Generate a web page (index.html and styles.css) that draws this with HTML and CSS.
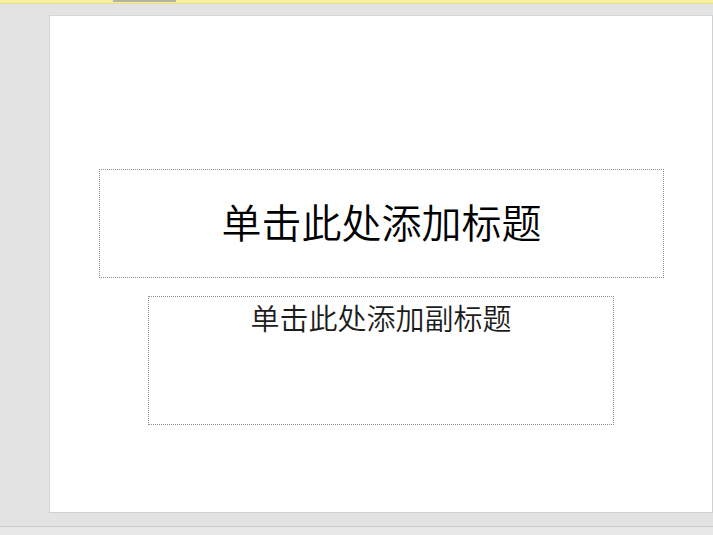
FILE: index.html
```html
<!DOCTYPE html>
<html lang="zh-CN">
<head>
<meta charset="utf-8">
<title>幻灯片</title>
<link rel="stylesheet" href="styles.css">
</head>
<body>
<div class="app">
  <div class="topbar"><div class="tab"></div></div>
  <div class="workspace">
    <div class="slide">
      <div class="ph title"><span>单击此处添加标题</span></div>
      <div class="ph subtitle"><span>单击此处添加副标题</span></div>
    </div>
  </div>
  <div class="statusbar"></div>
</div>
</body>
</html>
```
FILE: styles.css
```css
html, body {
  margin: 0;
  padding: 0;
  background: #e3e3e3;
}
.app {
  width: 713px;
  height: 535px;
  display: flex;
  flex-direction: column;
  overflow: hidden;
  font-family: "Noto Sans CJK SC", "Liberation Serif", serif;
}
.topbar {
  height: 3px;
  background: #f6f09e;
  border-bottom: 1px solid #e6df8c;
  position: relative;
  flex: none;
}
.tab {
  position: absolute;
  left: 113px;
  top: 0;
  width: 63px;
  height: 2px;
  background: #b5b3a4;
}
.workspace {
  flex: none;
  height: 522px;
  padding: 11px 0 0 49px;
  box-sizing: border-box;
}
.slide {
  width: 664px;
  height: 498px;
  box-sizing: border-box;
  background: #ffffff;
  border: 1px solid #d6d6d6;
  border-right-color: #cfcfcf;
  border-bottom-color: #d0d0d0;
  padding: 153px 0 0 49px;
  display: flex;
  flex-direction: column;
}
.ph {
  border: 1px dotted #8f8f8f;
  box-sizing: border-box;
  display: flex;
  justify-content: center;
}
.title {
  width: 565px;
  height: 109px;
  align-items: center;
  padding-bottom: 5px;
  font-size: 40px;
  font-weight: 350;
  line-height: 1;
  color: #000;
}
.subtitle {
  margin: 18px 0 0 49px;
  width: 466px;
  height: 129px;
  align-items: flex-start;
  padding-top: 3px;
  font-size: 29px;
  font-weight: 350;
  line-height: 1.2;
  color: #1c1c1c;
}
.statusbar {
  flex: 1;
  border-top: 1px solid #cccccc;
  background: #e8e8e8;
}
```
